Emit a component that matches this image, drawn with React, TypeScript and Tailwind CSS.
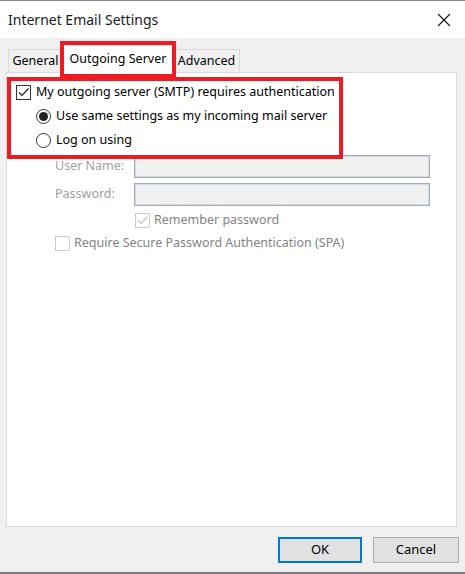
import React from "react";

const font = { fontFamily: '"Noto Sans", "Open Sans", sans-serif' };

function Check({ disabled }: { disabled?: boolean }) {
  return (
    <span
      className={
        "flex h-[15px] w-[15px] shrink-0 items-center justify-center border bg-white " +
        (disabled ? "border-[#cccccc]" : "border-[#333333]")
      }
    >
      <svg width="13" height="13" viewBox="0 0 13 13">
        <path
          d="M2 6.5 L5 9.5 L11.5 2.5"
          fill="none"
          stroke={disabled ? "#c6c6c6" : "#222222"}
          strokeWidth="1.2"
        />
      </svg>
    </span>
  );
}

function EmptyCheck() {
  return <span className="h-[15px] w-[15px] shrink-0 border border-[#cccccc] bg-white" />;
}

function Radio({ on }: { on?: boolean }) {
  return (
    <span className="flex h-[15px] w-[15px] shrink-0 items-center justify-center rounded-full border border-[#333333] bg-white">
      {on && <span className="h-[9px] w-[9px] rounded-full bg-[#222222]" />}
    </span>
  );
}

export default function App() {
  return (
    <div
      className="relative flex h-[574px] w-[465px] flex-col overflow-hidden border-t border-b-2 border-t-[#8a8a8a] border-b-[#7a7a7a] bg-[#f0f0f0] text-[12.5px] text-black"
      style={font}
    >
      {/* title bar */}
      <div className="flex h-[37px] shrink-0 items-center justify-between bg-white pl-[8px] pr-[14px]">
        <span className="text-[14px] leading-none text-[#1a1a1a]">Internet Email Settings</span>
        <svg width="14" height="14" viewBox="0 0 14 14">
          <path d="M1 1 L13 13 M13 1 L1 13" stroke="#111" strokeWidth="1.1" fill="none" />
        </svg>
      </div>

      {/* tabs */}
      <div className="flex h-[34px] shrink-0 items-end pl-[8px] pt-[6px]">
        <div className="flex h-[23px] w-[55px] items-center justify-center border border-b-0 border-[#d9d9d9]">
          General
        </div>
        <div className="relative z-10 -mb-px flex h-[28px] w-[110px] items-center justify-center border border-b-0 border-[#d9d9d9] bg-white">
          Outgoing Server
        </div>
        <div className="flex h-[23px] w-[67px] items-center justify-center border border-b-0 border-[#d9d9d9]">
          Advanced
        </div>
      </div>

      {/* panel */}
      <div className="ml-[6px] mr-[8px] flex h-[455px] flex-col border border-[#d9d9d9] bg-white pl-[9px] pt-[11px]">
        <div className="flex h-[16px] items-center gap-[5px]">
          <Check />
          <span>My outgoing server (SMTP) requires authentication</span>
        </div>
        <div className="ml-[20px] mt-[8px] flex h-[16px] items-center gap-[5px]">
          <Radio on />
          <span>Use same settings as my incoming mail server</span>
        </div>
        <div className="ml-[20px] mt-[8px] flex h-[16px] items-center gap-[5px]">
          <Radio />
          <span>Log on using</span>
        </div>

        <div className="ml-[39px] mt-[7px] flex flex-col gap-[5px] text-[#a0a0a0]">
          <div className="flex h-[23px] items-center">
            <span className="w-[79px]">User Name:</span>
            <div className="h-[23px] w-[296px] border border-[#a9a9a9] bg-[#f0f0f0] shadow-[inset_0_0_0_1px_#c9dcf2]" />
          </div>
          <div className="flex h-[23px] items-center">
            <span className="w-[79px]">Password:</span>
            <div className="h-[23px] w-[296px] border border-[#a9a9a9] bg-[#f0f0f0] shadow-[inset_0_0_0_1px_#c9dcf2]" />
          </div>
          <div className="ml-[80px] flex h-[18px] items-center gap-[4px]">
            <Check disabled />
            <span className="text-[#838383]">Remember password</span>
          </div>
        </div>
        <div className="ml-[39px] mt-[5px] flex h-[18px] items-center gap-[4px] text-[#838383]">
          <EmptyCheck />
          <span>Require Secure Password Authentication (SPA)</span>
        </div>
      </div>

      {/* buttons */}
      <div className="flex justify-end gap-[11px] pr-[6px] pt-[10px]">
        <button className="h-[26px] w-[84px] border-2 border-[#0078d7] bg-[#e1e1e1] text-[13px]">OK</button>
        <button className="h-[26px] w-[86px] border border-[#adadad] bg-[#e1e1e1] text-[13px]">Cancel</button>
      </div>

      {/* red annotation boxes */}
      <div className="pointer-events-none absolute left-[60px] top-[40px] z-20 h-[37px] w-[116px] border-[4px] border-[#ec1c24]" />
      <div className="pointer-events-none absolute left-[7px] top-[76px] z-20 h-[82px] w-[336px] border-[4px] border-[#ec1c24]" />
    </div>
  );
}
